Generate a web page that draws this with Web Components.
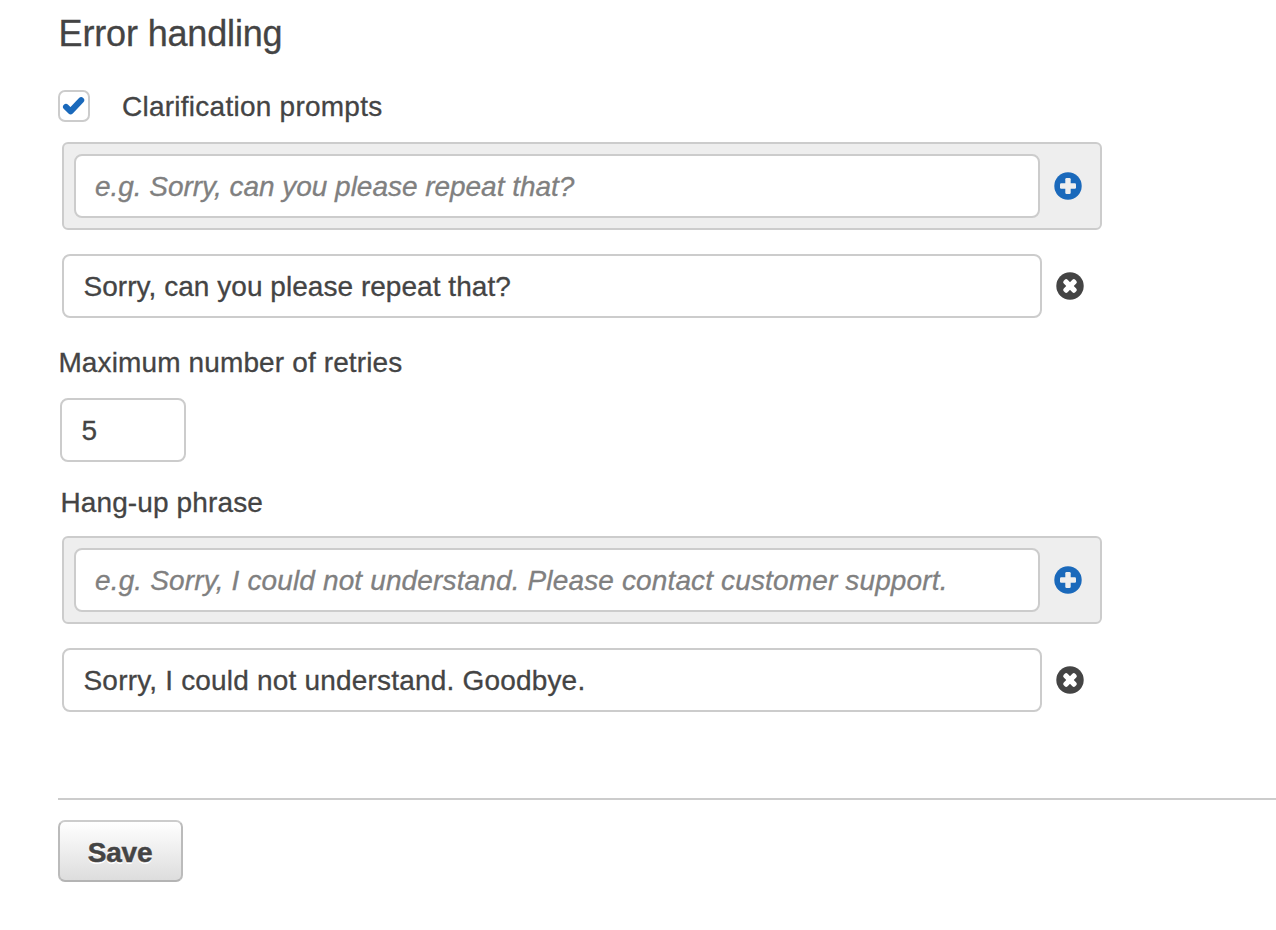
<!DOCTYPE html>
<html lang="en">
<head>
<meta charset="utf-8">
<title>Error handling</title>
<style>
html, body { margin: 0; background: #fff; }
body { height: 930px; overflow: hidden; font-family: "Liberation Sans", Arial, sans-serif; font-size: 28px; line-height: 32px; color: #444; -webkit-text-stroke: .3px; }
</style>
</head>
<body>
<error-settings></error-settings>
<script>
const define = (name, html) => customElements.define(name, class extends HTMLElement {
  constructor() {
    super();
    const t = document.createElement('template');
    t.innerHTML = html;
    this.attachShadow({ mode: 'open' }).append(t.content.cloneNode(true));
  }
});

define('check-box', `
<style>
:host { display: flex; align-items: center; gap: 32px; height: 32px; }
.box { box-sizing: border-box; width: 32px; height: 32px; border: 2px solid #ccc; border-radius: 7px; background: #fff; flex: none; }
.text { padding-top: 2px; }
svg { display: block; }
</style>
<span class="box"><svg width="28" height="28" viewBox="0 0 28 28"><path d="M6 14.9 10.6 19.4 21.2 8.1" fill="none" stroke="#1a69bb" stroke-width="6" stroke-linecap="round" stroke-linejoin="round"/></svg></span>
<span class="text"><slot></slot></span>`);

define('text-field', `
<style>
:host { display: flex; align-items: center; box-sizing: border-box; height: 64px; padding: 2px 20px 0 19.5px; border: 2px solid #ccc; border-radius: 8px; background: #fff; white-space: nowrap; }
:host([hint]) { color: #808080; font-style: italic; padding-left: 19px; }
</style>
<span><slot></slot></span>`);

define('circle-icon', `
<style>
:host { display: block; width: 28px; height: 28px; flex: none; color: #1a69bb; }
:host([remove]) { color: #444; }
:host([remove]) .add, :host(:not([remove])) .del { display: none; }
svg { display: block; }
</style>
<svg width="28" height="28" viewBox="0 0 28 28"><circle cx="14" cy="14" r="13.7" fill="currentColor"/>
<g class="add" fill="#eee"><rect x="11.3" y="6" width="5.4" height="16" rx="1.2"/><rect x="6" y="11.3" width="16" height="5.4" rx="1.2"/></g>
<g class="del" fill="#fff" transform="rotate(45 14 14)"><rect x="11.3" y="5.9" width="5.4" height="16.2" rx="2"/><rect x="5.9" y="11.3" width="16.2" height="5.4" rx="2"/></g></svg>`);

define('add-row', `
<style>
:host { display: flex; align-items: center; gap: 14px; box-sizing: border-box; width: 1040px; height: 88px; padding: 0 10px; border: 2px solid #ccc; border-radius: 6px; background: #eee; }
text-field { width: 966px; }
</style>
<text-field hint><slot></slot></text-field><circle-icon></circle-icon>`);

define('value-row', `
<style>
:host { display: flex; align-items: center; gap: 14px; }
text-field { width: 980px; }
</style>
<text-field><slot></slot></text-field><circle-icon remove></circle-icon>`);

define('save-button', `
<style>
:host { display: block; }
button { display: block; box-sizing: border-box; width: 125px; height: 62px; padding: 3px 1px 0 0; border: 2px solid; border-color: #ccc #bbb #b4b4b4; border-radius: 7px; background: linear-gradient(#fff, #ddd); font: bold 28px/32px "Liberation Sans", Arial, sans-serif; color: #444; text-shadow: 0 2px 0 #fff; letter-spacing: -.2px; -webkit-text-stroke: .5px; }
</style>
<button type="button"><slot></slot></button>`);

define('error-settings', `
<style>
:host { display: block; padding: 13px 0 0 58px; }
h1 { margin: 0; padding-left: .6px; font-size: 36px; line-height: 42px; font-weight: 400; letter-spacing: -.16px; }
check-box { margin-top: 35px; letter-spacing: .25px; }
add-row { margin: 20px 0 24px 4px; letter-spacing: -.03px; }
value-row { margin-left: 4px; letter-spacing: .04px; }
.label { height: 32px; box-sizing: border-box; padding: 1px 0 0 .4px; letter-spacing: .13px; }
.retries { margin-top: 28px; }
.num { width: 126px; margin: 20px 0 0 2px; }
.hang { margin: 24px 0 0 2px; }
.hang + add-row { margin-top: 18px; letter-spacing: .14px; }
.goodbye { letter-spacing: .19px; }
hr { margin: 86px 0 20px; border: 0; height: 2px; background: #ccc; }
</style>
<h1>Error handling</h1>
<check-box>Clarification prompts</check-box>
<add-row>e.g. Sorry, can you please repeat that?</add-row>
<value-row>Sorry, can you please repeat that?</value-row>
<div class="label retries">Maximum number of retries</div>
<text-field class="num">5</text-field>
<div class="label hang">Hang-up phrase</div>
<add-row>e.g. Sorry, I could not understand. Please contact customer support.</add-row>
<value-row class="goodbye">Sorry, I could not understand. Goodbye.</value-row>
<hr>
<save-button>Save</save-button>`);
</script>
</body>
</html>
